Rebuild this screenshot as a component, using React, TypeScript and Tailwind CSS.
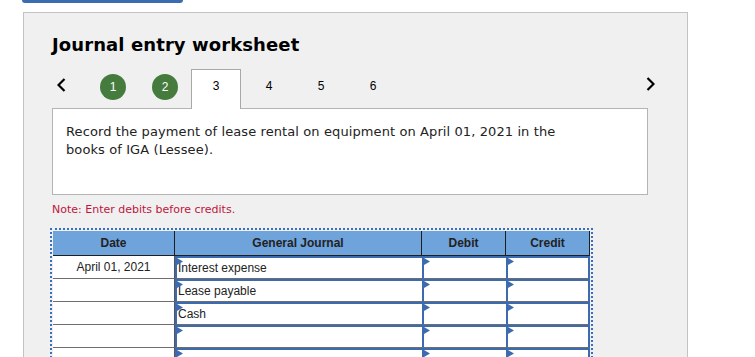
import React from "react";

const Flag = () => (
  <svg className="absolute left-0 top-0" width="6" height="7" viewBox="0 0 6 7">
    <polygon points="0,0 6,3.5 0,7" fill="#3c6bb0" />
  </svg>
);

export default function App() {
  const rows = [
    { date: "April 01, 2021", acct: "Interest expense" },
    { date: "", acct: "Lease payable" },
    { date: "", acct: "Cash" },
    { date: "", acct: "" },
    { date: "", acct: "" },
  ];
  return (
    <div className="w-[755px] h-[357px] overflow-hidden bg-white">
      <div className="ml-[22px] w-[161px] h-[3px] bg-[#3b6cb0] rounded-b-[3px]" />
      <div className="ml-[23px] mt-[9px] w-[665px] h-[400px] border border-[#c3c3c3] bg-[#f0f0f0] pl-[28px] pt-[21px]">
        <div className="font-['DejaVu_Sans',sans-serif] font-bold text-[18px] leading-[22px] text-black tracking-[0.1px]">
          Journal entry worksheet
        </div>
        <div className="flex h-[39px] mt-[13px] font-['Liberation_Sans',Arial,sans-serif] text-[12px] text-black">
          <div className="w-[35px] h-[32px] flex items-center pl-[5px]">
            <svg width="9" height="14" viewBox="0 0 9 14">
              <polyline points="7.5,1 1.5,7 7.5,13" fill="none" stroke="#000" strokeWidth="2.2" />
            </svg>
          </div>
          {["1", "2"].map((n) => (
            <div key={n} className="w-[52px] h-[36px] flex items-center justify-center">
              <div className="w-[26px] h-[26px] rounded-full bg-[#457c3e] text-white flex items-center justify-center text-[12px]">
                {n}
              </div>
            </div>
          ))}
          <div className="w-[50px] h-[40px] mr-[2px] bg-white border border-b-0 border-[#a8a8a8] relative z-10 flex items-start justify-center pt-[7px]">
            3
          </div>
          {["4", "5", "6"].map((n) => (
            <div key={n} className="w-[52px] h-[33px] flex items-center justify-center">
              {n}
            </div>
          ))}
          <div className="ml-auto mr-[32px] h-[30px] flex items-center">
            <svg width="9" height="14" viewBox="0 0 9 14">
              <polyline points="1.5,1 7.5,7 1.5,13" fill="none" stroke="#000" strokeWidth="2.2" />
            </svg>
          </div>
        </div>
        <div className="w-[596px] h-[87px] border border-[#b4b4b4] bg-white px-[13px] pt-[14px] font-['DejaVu_Sans',sans-serif] text-[13px] leading-[18px] text-[#222] tracking-[0.1px]">
          <div className="max-w-[500px]">
            Record the payment of lease rental on equipment on April 01, 2021 in the books of IGA (Lessee).
          </div>
        </div>
        <div className="mt-[9px] font-['DejaVu_Sans',sans-serif] text-[11px] leading-[12px] text-[#c0143c]">
          Note: Enter debits before credits.
        </div>
        <div className="mt-[12px] -ml-[2px] w-[543px] border-2 border-dotted border-[#3a6fc0] p-px font-['Liberation_Sans',Arial,sans-serif] text-[12px] text-[#222]">
          <div className="grid grid-cols-[122px_247px_84px_84px] h-[25px] bg-[#6fa3dc] border-b border-[#1e1e1e] font-bold">
            <div className="flex items-center justify-center border-r border-[#1e1e1e]">Date</div>
            <div className="flex items-center justify-center border-r border-[#1e1e1e]">General Journal</div>
            <div className="flex items-center justify-center border-r border-[#1e1e1e]">Debit</div>
            <div className="flex items-center justify-center border-r border-[#1e1e1e]">Credit</div>
          </div>
          {rows.map((r, i) => (
            <div key={i} className="grid grid-cols-[122px_247px_84px_84px] h-[23px]">
              <div className="bg-white flex items-center justify-center border-r border-r-[#555] border-b border-b-[#6e6e6e]">
                {r.date}
              </div>
              <div className="relative bg-white flex items-center pl-px border-l-2 border-l-[#3c6bb0] border-t-2 border-t-[#3c6bb0] border-b border-b-[#6e6e6e]">
                <Flag />
                {r.acct}
              </div>
              <div className="relative bg-white border-l-2 border-l-[#3c6bb0] border-t-2 border-t-[#3c6bb0] border-b border-b-[#6e6e6e]">
                <Flag />
              </div>
              <div className="relative bg-white border-l-2 border-l-[#3c6bb0] border-t-2 border-t-[#3c6bb0] border-r-2 border-r-[#3c6bb0] border-b border-b-[#6e6e6e]">
                <Flag />
              </div>
            </div>
          ))}
        </div>
      </div>
    </div>
  );
}
